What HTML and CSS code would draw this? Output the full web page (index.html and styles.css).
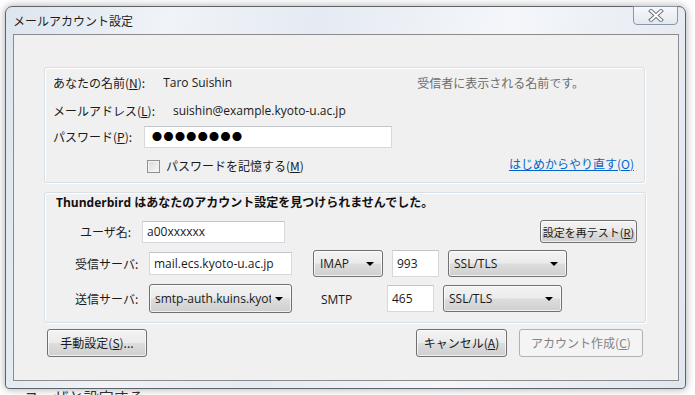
FILE: index.html
```html
<!DOCTYPE html>
<html lang="ja">
<head>
  <meta charset="UTF-8" />
  <title>メールアカウント設定</title>
  <link rel="stylesheet" href="styles.css">
</head>
<body>

  <!-- page behind the dialog -->
  <div class="behind">
    <span class="behind-text">ユーザと設定する</span>
  </div>

  <!-- Dialog window -->
  <div class="window">
    <div class="titlebar">
      <span class="title">メールアカウント設定</span>
      <div class="close-btn">
        <svg width="16" height="13" viewBox="0 0 16 13">
          <path d="M3 2 L13 11 M13 2 L3 11" stroke="#70757c" stroke-width="4" stroke-linecap="square" fill="none"/>
          <path d="M3 2 L13 11 M13 2 L3 11" stroke="#fff" stroke-width="2" stroke-linecap="square" fill="none"/>
        </svg>
      </div>
    </div>

    <div class="client">

      <!-- Identity -->
      <div class="groupbox identity">
        <div class="row row-name">
          <span class="label">あなたの名前(<u>N</u>):</span>
          <span class="value">Taro Suishin</span>
          <span class="hint">受信者に表示される名前です。</span>
        </div>
        <div class="row row-email">
          <span class="label">メールアドレス(<u>L</u>):</span>
          <span class="value">suishin@example.kyoto-u.ac.jp</span>
        </div>
        <div class="row row-pass">
          <span class="label">パスワード(<u>P</u>):</span>
          <div class="textbox pass-box"><span class="dots">●●●●●●●●</span></div>
        </div>
        <div class="row row-remember">
          <span class="checkbox"></span>
          <span class="check-label">パスワードを記憶する(<u>M</u>)</span>
          <a href="#" class="restart-link">はじめからやり直す(O)</a>
        </div>
      </div>

      <!-- Server settings -->
      <div class="groupbox servers">
        <div class="notice">Thunderbird はあなたのアカウント設定を見つけられませんでした。</div>

        <div class="row row-user">
          <span class="field-label user-label">ユーザ名:</span>
          <div class="textbox wide">a00xxxxxx</div>
          <div class="button retest">設定を再テスト(<u>R</u>)</div>
        </div>

        <div class="row row-in">
          <span class="field-label">受信サーバ:</span>
          <div class="textbox wide in-host">mail.ecs.kyoto-u.ac.jp</div>
          <div class="button dropdown proto"><span class="dd-text">IMAP</span><span class="arrow"></span></div>
          <div class="textbox port">993</div>
          <div class="button dropdown ssl"><span class="dd-text">SSL/TLS</span><span class="arrow"></span></div>
        </div>

        <div class="row row-out">
          <span class="field-label">送信サーバ:</span>
          <div class="button dropdown out-host"><span class="dd-text">smtp-auth.kuins.kyoto-u.ac.jp</span><span class="arrow"></span></div>
          <span class="smtp">SMTP</span>
          <div class="textbox port port-out">465</div>
          <div class="button dropdown ssl"><span class="dd-text">SSL/TLS</span><span class="arrow"></span></div>
        </div>
      </div>

      <!-- Buttons -->
      <div class="actions">
        <div class="button manual">手動設定(<u>S</u>)...</div>
        <div class="button cancel">キャンセル(<u>A</u>)</div>
        <div class="button create disabled">アカウント作成(<u>C</u>)</div>
      </div>

    </div>
  </div>

</body>
</html>
```

FILE: styles.css
```css
* {
  box-sizing: border-box;
  margin: 0;
  padding: 0;
}

body {
  position: relative;
  width: 695px;
  height: 395px;
  overflow: hidden;
  padding: 6px 0 0 5px;
  background-color: #fff;
  color: #1a1a1a;
  font-family: 'Open Sans', 'Noto Sans CJK JP', sans-serif;
  font-size: 12px;
  line-height: 16px;
}

.behind {
  position: absolute;
  top: 0;
  left: 0;
  width: 695px;
  height: 395px;
}

.behind-text {
  position: absolute;
  left: 24px;
  top: 389px;
  font-family: 'Noto Sans CJK JP', sans-serif;
  font-size: 15px;
  color: #333;
}

/* Window frame */
.window {
  position: relative;
  z-index: 1;
  width: 681px;
  height: 383px;
  padding: 0 6px 7px 7px;
  border: 1px solid #5f646b;
  border-radius: 7px 7px 4px 4px;
  background: linear-gradient(100deg, #dde5ee 0%, #f0f3f8 22%, #e5ebf2 42%, #f4f6fa 68%, #e0e7ef 100%);
  box-shadow: 0 0 9px rgba(0, 0, 0, 0.35);
}

.titlebar {
  height: 27px;
  display: flex;
  align-items: center;
}

.title {
  font-family: 'Noto Sans CJK JP', sans-serif;
  font-size: 12px;
  color: #1e1e1e;
}

.close-btn {
  position: absolute;
  top: -1px;
  right: 7px;
  width: 45px;
  height: 19px;
  display: flex;
  align-items: center;
  justify-content: center;
  border: 1px solid #8d97a3;
  border-radius: 0 0 4px 4px;
  background: linear-gradient(#f6f8fb, #e4e9ef);
}

.client {
  width: 666px;
  height: 347px;
  padding: 32px 0 0 30px;
  border: 1px solid #8b8b8b;
  background-color: #f0f0f0;
}

/* Group boxes */
.groupbox {
  border: 1px solid #d5dfe5;
  border-radius: 3px;
  box-shadow: 1px 1px 0 #fff, inset 1px 1px 0 #fff;
}

.identity {
  width: 601px;
  height: 116px;
  padding: 4px 10px 5px 8px;
}

.servers {
  width: 602px;
  height: 131px;
  margin-top: 9px;
  padding: 2px 8px 9px 11px;
}

.row {
  display: flex;
  align-items: center;
}

.identity .row {
  height: 22px;
}

.row-email { margin-top: 6px; }
.row-pass { margin-top: 4px; }
.row-remember { margin-top: 7px; }

.label {
  font-family: 'Noto Sans CJK JP', sans-serif;
}

.value {
  margin-left: 18px;
}

.hint {
  margin-left: auto;
  margin-right: 50px;
  font-family: 'Noto Sans CJK JP', sans-serif;
  color: #6d6d6d;
}

.textbox {
  height: 22px;
  display: flex;
  align-items: center;
  padding: 0 4px;
  background-color: #fff;
  border: 1px solid #d6d8dc;
  border-top-color: #c2c5ca;
  white-space: nowrap;
  overflow: hidden;
}

.pass-box {
  width: 248px;
  margin-left: 12px;
  padding-left: 7px;
}

.dots {
  font-family: 'Noto Sans CJK JP', sans-serif;
  font-size: 10px;
  letter-spacing: 1.4px;
  color: #000;
}

.checkbox {
  width: 13px;
  height: 13px;
  margin-left: 94px;
  border: 1px solid #8e8f8f;
  background: linear-gradient(135deg, #d8d8d8, #f9f9f9);
  box-shadow: inset 0 0 0 1px #f4f4f4;
}

.check-label {
  margin-left: 6px;
  font-family: 'Noto Sans CJK JP', sans-serif;
}

.restart-link {
  margin-left: auto;
  margin-bottom: 5px;
  color: #0066cc;
  font-family: 'Noto Sans CJK JP', sans-serif;
}

/* Server settings */
.notice {
  height: 16px;
  font-weight: bold;
  color: #111;
}

.row-user {
  height: 23px;
  margin-top: 9px;
}

.row-in {
  height: 27px;
  margin-top: 7px;
}

.row-out {
  height: 29px;
  margin-top: 7px;
}

.field-label {
  width: 74px;
  margin-left: 19px;
  font-family: 'Noto Sans CJK JP', sans-serif;
}

.user-label {
  width: 62px;
  margin-left: 24px;
}

.wide {
  width: 143px;
}

.in-host {
  height: 23px;
}

.port {
  width: 47px;
  height: 27px;
  margin-left: 9px;
}

.port-out {
  margin-left: 0;
}

.smtp {
  width: 66px;
  margin-left: 29px;
  padding-top: 3px;
}

/* Buttons */
.button {
  display: flex;
  align-items: center;
  justify-content: center;
  border: 1px solid #707070;
  border-radius: 3px;
  background: linear-gradient(#f3f3f3 0%, #ebebeb 48%, #dddddd 52%, #cfcfcf 100%);
  box-shadow: inset 0 0 0 1px rgba(255, 255, 255, 0.7);
  font-family: 'Noto Sans CJK JP', sans-serif;
  white-space: nowrap;
}

.retest {
  width: 97px;
  height: 23px;
  margin-left: auto;
  font-size: 11px;
}

.dropdown {
  justify-content: space-between;
  padding: 0 8px 0 6px;
  font-family: 'Open Sans', sans-serif;
}

.dd-text {
  flex: 1;
  overflow: hidden;
  white-space: nowrap;
}

.arrow {
  flex: none;
  width: 0;
  height: 0;
  margin-left: 4px;
  border-left: 4px solid transparent;
  border-right: 4px solid transparent;
  border-top: 4px solid #000;
}

.proto {
  width: 70px;
  height: 27px;
  margin-left: 21px;
}

.ssl {
  width: 119px;
  height: 27px;
  margin-left: 9px;
  padding-left: 5px;
}

.out-host {
  width: 143px;
  height: 29px;
  padding-left: 5px;
}

.actions {
  display: flex;
  margin-top: 6px;
  padding: 0 35px 0 3px;
}

.actions .button {
  height: 28px;
}

.manual { width: 100px; }

.cancel {
  width: 91px;
  margin-left: auto;
}

.create {
  width: 124px;
  margin-left: 12px;
}

.button.disabled {
  border-color: #adb2b5;
  background: #f4f4f4;
  box-shadow: none;
  color: #838383;
}
```
